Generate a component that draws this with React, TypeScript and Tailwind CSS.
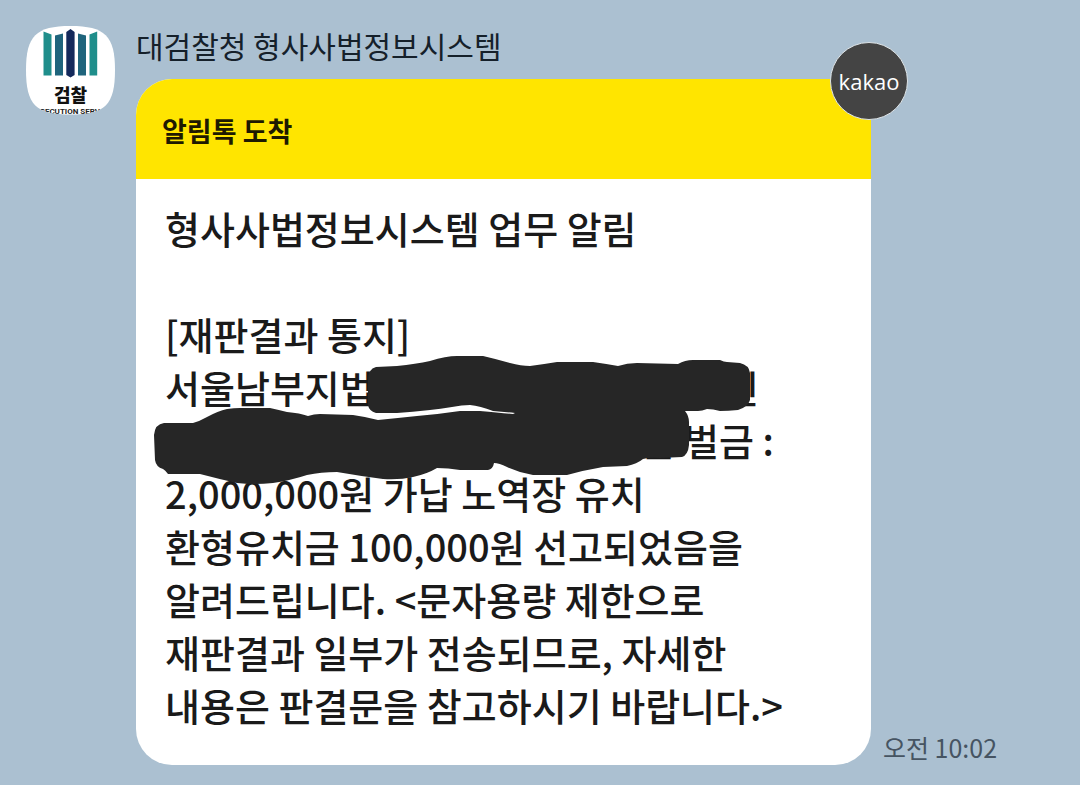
const REDACTION =
  'M368 380 Q368 369 376 367 L397 366 Q416 364 430 361 Q446 356 457 356 L483 356 Q496 359 510 363 Q521 366 530 366 Q545 364 557 362 L593 362 Q607 364 618 366 Q627 363 637 363 L678 364 Q685 360 693 360 L720 360 Q724 362 727 362 L740 363 Q749 365 750 373 L750 400 Q748 407 738 410 Q728 411 720 411 Q713 409 707 409 Q702 411 698 411 L685 411 Q689 416 689 422 L689 445 Q688 455 682 457 L660 458 Q650 457 643 459 Q637 464 627 466 L603 467 Q585 470 567 475 L533 475 Q520 473 507 467 Q499 463 494 463 Q493 469 488 470 L460 470 Q448 468 437 468 Q427 474 413 477 Q400 480 383 479 Q360 476 337 472 Q321 472 307 475 Q292 480 273 483 Q254 485 237 483 Q219 479 200 474 L168 474 Q165 470 163 469 Q156 467 155 460 L154 435 Q155 424 164 423 L193 423 Q200 421 207 417 Q218 411 227 409 Q234 408 240 408 L270 408 Q279 410 287 412 Q300 413 308 416 Q314 414 320 414 L353 415 Q367 417 378 420 Q398 418 417 416 Q440 414 460 411 L480 411 Q500 413 513 414 L515 413 Q504 412 493 411 Q480 406 470 405 Q462 405 452 407 Q440 409 430 410 Q412 412 397 413 L376 413 Q369 411 368 405 Z';

function Avatar() {
  return (
    <svg viewBox="26 26 89 89" className="size-[89px] shrink-0" role="img" aria-label="검찰">
      <defs>
        <clipPath id="avatar-shape">
          <path d="M70.5 26 C105 26 115 36 115 70 C115 105 105 114.500 70.500 114.500 C36 114.500 26 105 26 70 C26 36 36 26 70.500 26 Z" />
        </clipPath>
      </defs>
      <g clipPath="url(#avatar-shape)">
        <rect x="26" y="26" width="89" height="89" fill="#fff" />
        <path d="M43.500 31.500 L51.500 34.500 V75.500 H43.500 Z M97.200 31.500 L89.500 34.500 V75.500 H97.200 Z" fill="#1f8e8b" />
        <path d="M55 35.500 L63 33.500 V75.500 H55 Z M86 35.500 L78 33.500 V75.500 H86 Z" fill="#1f647c" />
        <path d="M66.300 32 L70.500 29 L74.600 32 V75 L70.500 77.500 L66.300 75 Z" fill="#14295b" />
        <text x="70.500" y="102" textAnchor="middle" fill="#111" className="font-['Noto_Sans_CJK_KR',sans-serif] text-[18px] font-black">
          검찰
        </text>
        <text x="70" y="114" textAnchor="middle" fill="#222" className="font-['Roboto',sans-serif] text-[8px] font-bold">
          SECUTION SERV
        </text>
      </g>
    </svg>
  );
}

export default function App() {
  return (
    <main className="flex min-h-screen items-start gap-[21px] bg-[#abc0d1] pt-6 pr-[83px] pb-5 pl-[26px] font-['Noto_Sans_CJK_KR','Noto_Sans_CJK_SC',sans-serif]">
      <div className="pt-0.5">
        <Avatar />
      </div>
      <section className="min-w-0 flex-1">
        <h1 className="h-[55px] text-[30px] leading-[42px] whitespace-nowrap text-[#15202a]">대검찰청 형사사법정보시스템</h1>
        <div className="flex items-end gap-3">
          <article className="relative min-w-0 flex-1 rounded-[36px] bg-white">
            <header className="flex h-[100px] items-center rounded-t-[36px] bg-[#ffe500] px-[26px] pt-1">
              <h2 className="text-[27px] leading-10 font-bold text-[#1e1a00]">알림톡 도착</h2>
            </header>
            <span className="absolute -top-[37px] -right-[37px] flex size-[78px] items-center justify-center rounded-full border border-[#dde3e6] bg-[#444] font-['Open_Sans',sans-serif] text-[22px] leading-8 font-medium text-white">
              kakao
            </span>
            <div className="relative px-[29px] pt-[22px] pb-[34px] text-[38px] leading-[53px] font-medium whitespace-nowrap text-[#1a1a1a]">
              <p>형사사법정보시스템 업무 알림</p>
              <p className="mt-[53px]">[재판결과 통지]</p>
              <p className="flex">
                <span className="w-[559px]">서울남부지법</span>
                <span>인</span>
              </p>
              <p className="flex">
                <span className="ml-[476px] w-[43px]">은</span>
                <span>벌금 :</span>
              </p>
              <p>2,000,000원 가납 노역장 유치</p>
              <p>환형유치금 100,000원 선고되었음을</p>
              <p>알려드립니다. &lt;문자용량 제한으로</p>
              <p>재판결과 일부가 전송되므로, 자세한</p>
              <p>내용은 판결문을 참고하시기 바랍니다.&gt;</p>
              <svg viewBox="150 350 610 140" className="absolute top-[171px] left-[14px] h-[140px] w-[610px]" aria-hidden="true">
                <path d={REDACTION} fill="#262626" />
              </svg>
            </div>
          </article>
          <time dateTime="10:02" className="w-[114px] shrink-0 text-[25px] leading-9 whitespace-nowrap text-[#465462]">
            오전 10:02
          </time>
        </div>
      </section>
    </main>
  );
}
